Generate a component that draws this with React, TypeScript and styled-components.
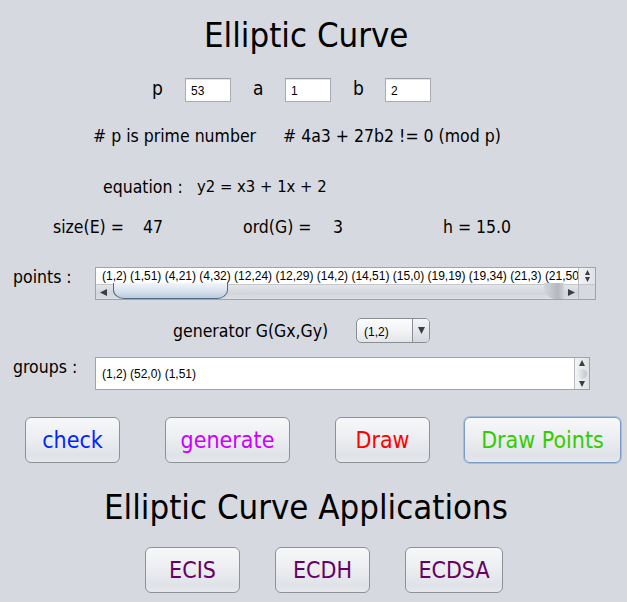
import React from "react";
import styled, { createGlobalStyle } from "styled-components";

const GlobalStyle = createGlobalStyle`
  html, body { margin: 0; padding: 0; background: #d6d9df; }
  body { font-family: "DejaVu Sans Condensed", "DejaVu Sans", sans-serif; color: #000; }
  * { box-sizing: border-box; }
`;

const UI = `"DejaVu Sans Condensed", "DejaVu Sans", sans-serif`;
const DIALOG = `"Liberation Sans", Arial, sans-serif`;

const Page = styled.div`
  width: 627px;
  height: 602px;
  overflow: hidden;
  display: flex;
  flex-direction: column;
  background: #d6d9df;
`;

const Row = styled.div<{ $top: number; $left: number; $h: number; $align?: string }>`
  display: flex;
  align-items: ${(p) => p.$align ?? "center"};
  flex-shrink: 0;
  margin-top: ${(p) => p.$top}px;
  padding-left: ${(p) => p.$left}px;
  height: ${(p) => p.$h}px;
`;

const Heading = styled.h1`
  margin: 0;
  font-family: ${UI};
  font-size: 34.5px;
  font-weight: normal;
  line-height: 40px;
  white-space: nowrap;
`;

const ParamLabel = styled.span<{ $w: number; $ml?: number }>`
  display: inline-block;
  width: ${(p) => p.$w}px;
  margin-left: ${(p) => p.$ml ?? 0}px;
  font-size: 19px;
  line-height: 24px;
  padding-bottom: 4px;
`;

const TextField = styled.div`
  width: 46px;
  height: 24px;
  background: #fff;
  border: 1px solid #a9acb1;
  border-top-color: #9a9da3;
  box-shadow: inset 0 1px 0 #e4e6ea;
  font-family: ${DIALOG};
  font-size: 12px;
  line-height: 22px;
  padding: 1px 0 0 5px;
`;

const Text = styled.span<{ $w?: number; $size?: number }>`
  display: inline-block;
  flex-shrink: 0;
  ${(p) => (p.$w ? `width: ${p.$w}px;` : "")}
  font-size: ${(p) => p.$size ?? 17.5}px;
  line-height: 20px;
  white-space: pre;
`;

const PointsBox = styled.div`
  width: 501px;
  height: 33px;
  border: 1px solid #a0a4aa;
  background: #fff;
  display: grid;
  grid-template-columns: 1fr 17px;
  grid-template-rows: 1fr 15px;
`;

const LineText = styled.div`
  font-family: ${DIALOG};
  font-size: 12px;
  line-height: 17px;
  padding-left: 6px;
  white-space: nowrap;
  overflow: hidden;
`;

const MiniV = styled.div`
  display: flex;
  flex-direction: column;
  align-items: center;
  justify-content: space-between;
  border-left: 1px solid #b8bbc1;
  background: linear-gradient(90deg, #f2f3f5, #dfe2e6);
  padding: 2px 0;
`;

const MiniThumb = styled.div<{ $h: number }>`
  width: 10px;
  height: ${(p) => p.$h}px;
  border-radius: 5px;
  background: linear-gradient(90deg, #eef0f3, #c3c7cd);
`;

const HScroll = styled.div`
  display: flex;
  align-items: stretch;
  background: linear-gradient(#e3e5e9, #d2d5da 60%, #dcdfe3);
  border-top: 1px solid #c4c7cc;
`;

const ArrowCell = styled.div<{ $w: number }>`
  width: ${(p) => p.$w}px;
  display: flex;
  align-items: center;
  justify-content: center;
`;

const Track = styled.div`
  flex: 1;
  display: flex;
  align-items: stretch;
`;

const HThumb = styled.div`
  margin-left: 3px;
  margin-top: -2px;
  width: 115px;
  border: 1px solid #4e6a8a;
  border-top: none;
  border-radius: 0 0 11px 11px / 0 0 9px 9px;
  background: linear-gradient(#f1f5fa, #d7e2ee 55%, #bccbdc);
`;

const TrackEnd = styled.div`
  margin-left: auto;
  width: 20px;
  margin-top: -2px;
  border-radius: 0 0 0 12px;
  background: linear-gradient(90deg, #d3d6db, #b4b8be 70%, #cfd2d6);
`;

const Corner = styled.div`
  background: #d6d9df;
  border-left: 1px solid #b8bbc1;
  border-top: 1px solid #c4c7cc;
`;

const Combo = styled.div`
  width: 74px;
  height: 25px;
  display: flex;
  border: 1px solid #8a8e94;
  border-radius: 5px;
  overflow: hidden;
  background: linear-gradient(#fdfdfe, #f0f1f4 60%, #e2e5e9);
`;

const ComboText = styled.div`
  flex: 1;
  font-family: ${DIALOG};
  font-size: 12px;
  line-height: 24px;
  padding-left: 7px;
  padding-top: 1px;
`;

const ComboArrow = styled.div`
  width: 17px;
  border-left: 1px solid #8a8e94;
  display: flex;
  align-items: center;
  justify-content: center;
  background: linear-gradient(#f4f5f7, #d5d8dd);
`;

const GroupsBox = styled.div`
  width: 495px;
  height: 33px;
  border: 1px solid #a0a4aa;
  background: #fff;
  display: grid;
  grid-template-columns: 1fr 15px;
`;

const GroupText = styled.div`
  font-family: ${DIALOG};
  font-size: 12px;
  line-height: 15px;
  padding: 9px 0 0 6px;
  white-space: nowrap;
`;

const Btn = styled.button<{ $w: number; $color: string; $ml?: number; $focus?: boolean }>`
  width: ${(p) => p.$w}px;
  height: 46px;
  margin-left: ${(p) => p.$ml ?? 0}px;
  padding: 0;
  border-radius: 6px;
  border: 1px solid ${(p) => (p.$focus ? "#7b9cc6" : "#8e9196")};
  box-shadow: ${(p) => (p.$focus ? "0 0 0 1px #a6bedc" : "none")};
  background: linear-gradient(#f7f8f9, #eceef1 45%, #dfe2e7 85%, #e6e8ec);
  color: ${(p) => p.$color};
  font-family: ${UI};
  font-size: 23px;
  line-height: 44px;
  cursor: pointer;
`;

type Dir = "up" | "down" | "left" | "right";
const tri: Record<Dir, string> = {
  up: "0,6 3,0 6,6",
  down: "0,0 6,0 3,6",
  left: "6,0 6,6 0,3",
  right: "0,0 0,6 6,3",
};
function Arrow({ dir, size }: { dir: Dir; size: number }) {
  return (
    <svg width={size} height={size} viewBox="0 0 6 6">
      <polygon points={tri[dir]} fill="#3b3e44" />
    </svg>
  );
}

const points =
  "(1,2) (1,51) (4,21) (4,32) (12,24) (12,29) (14,2) (14,51) (15,0) (19,19) (19,34) (21,3) (21,50) (23,21) (23,32) (24,13)";

export default function App() {
  return (
    <Page>
      <GlobalStyle />
      <Row $top={15} $left={204} $h={40}>
        <Heading>Elliptic Curve</Heading>
      </Row>

      <Row $top={23} $left={152} $h={24}>
        <ParamLabel $w={33}>p</ParamLabel>
        <TextField>53</TextField>
        <ParamLabel $w={32} $ml={22}>a</ParamLabel>
        <TextField>1</TextField>
        <ParamLabel $w={32} $ml={22}>b</ParamLabel>
        <TextField>2</TextField>
      </Row>

      <Row $top={24} $left={93} $h={20}>
        <Text $w={190}># p is prime number</Text>
        <Text>{"# 4a3 + 27b2 != 0 (mod p)"}</Text>
      </Row>

      <Row $top={31} $left={103} $h={20}>
        <Text $w={94}>equation :</Text>
        <Text $size={16.5}>y2 = x3 + 1x + 2</Text>
      </Row>

      <Row $top={20} $left={53} $h={20}>
        <Text $w={90}>size(E) =</Text>
        <Text $w={100}>47</Text>
        <Text $w={90}>ord(G) =</Text>
        <Text $w={110}>3</Text>
        <Text $w={33}>h =</Text>
        <Text>15.0</Text>
      </Row>

      <Row $top={30} $left={13} $h={33} $align="flex-start">
        <Text $w={82}>points :</Text>
        <PointsBox>
          <LineText>{points}</LineText>
          <MiniV>
            <Arrow dir="up" size={5} />
            <Arrow dir="down" size={5} />
          </MiniV>
          <HScroll>
            <ArrowCell $w={14}>
              <Arrow dir="left" size={7} />
            </ArrowCell>
            <Track>
              <HThumb />
              <TrackEnd />
            </Track>
            <ArrowCell $w={14}>
              <Arrow dir="right" size={7} />
            </ArrowCell>
          </HScroll>
          <Corner />
        </PointsBox>
      </Row>

      <Row $top={18} $left={173} $h={25}>
        <Text $w={183}>generator G(Gx,Gy)</Text>
        <Combo>
          <ComboText>(1,2)</ComboText>
          <ComboArrow>
            <Arrow dir="down" size={7} />
          </ComboArrow>
        </Combo>
      </Row>

      <Row $top={14} $left={13} $h={33} $align="flex-start">
        <Text $w={82}>groups :</Text>
        <GroupsBox>
          <GroupText>(1,2) (52,0) (1,51)</GroupText>
          <MiniV>
            <Arrow dir="up" size={6} />
            <MiniThumb $h={10} />
            <Arrow dir="down" size={6} />
          </MiniV>
        </GroupsBox>
      </Row>

      <Row $top={27} $left={25} $h={46}>
        <Btn $w={95} $color="#0026ff">check</Btn>
        <Btn $w={125} $ml={45} $color="#cc00ff">generate</Btn>
        <Btn $w={95} $ml={45} $color="#ff0000">Draw</Btn>
        <Btn $w={157} $ml={34} $color="#33cc00" $focus>Draw Points</Btn>
      </Row>

      <Row $top={24} $left={104} $h={40}>
        <Heading>Elliptic Curve Applications</Heading>
      </Row>

      <Row $top={20} $left={145} $h={46}>
        <Btn $w={95} $color="#660066">ECIS</Btn>
        <Btn $w={95} $ml={35} $color="#660066">ECDH</Btn>
        <Btn $w={98} $ml={35} $color="#660066">ECDSA</Btn>
      </Row>
    </Page>
  );
}
